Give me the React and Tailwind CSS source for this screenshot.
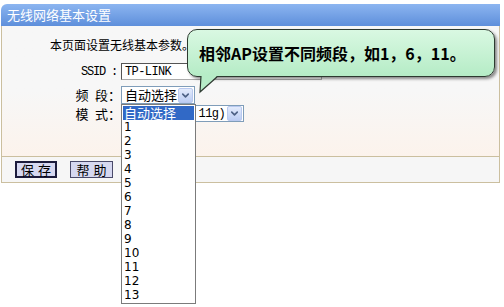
import { ChevronDown } from "lucide-react";

const channels = ["1", "2", "3", "4", "5", "6", "7", "8", "9", "10", "11", "12", "13"];

function Arrow() {
  return (
    <div className="flex h-[15px] w-[15px] items-center justify-center rounded-[2px] border border-[#b9c9ef] bg-gradient-to-b from-[#e3ebfc] to-[#bccdf3]">
      <ChevronDown className="h-[11px] w-[11px] text-[#4d6185]" strokeWidth={3.5} />
    </div>
  );
}

export default function App() {
  return (
    <div className="relative h-[307px] w-[504px] overflow-hidden bg-white font-['Noto_Sans_CJK_SC',sans-serif] text-[12px] leading-[14px] text-black">
      <div className="ml-[1px] w-[499px] pt-[4px]">
        <div className="flex h-[22px] items-center rounded-tl-[6px] bg-gradient-to-b from-[#8cb5f0] to-[#5e8fdb] pl-[6px] text-[13px] text-white">
          无线网络基本设置
        </div>
        <div className="h-[130px] border-x border-[#cbbf9f] bg-gradient-to-b from-[#f7f7f7] via-[#f7f7f7] to-[#fcf3ec] pt-[12px]">
          <div className="h-[14px] pl-[48px]">本页面设置无线基本参数。</div>
          <div className="mt-[11px] flex h-[17px] items-center">
            <div className="w-[119px] pr-[4px] text-right font-['Liberation_Mono',monospace] tracking-[-1.2px]">SSID :</div>
            <div className="flex h-[17px] w-[201px] items-center border border-t-[#555] border-l-[#555] border-b-[#aaa] border-r-[#aaa] bg-white pl-[3px] font-['Liberation_Mono',monospace] tracking-[-0.6px]">
              TP-LINK
            </div>
          </div>
          <div className="mt-[6px] flex h-[18px] items-center">
            <div className="w-[119px] whitespace-pre text-right text-[13px]">频{"\u2002"}段：</div>
            <div className="flex h-[18px] w-[74px] items-center justify-between border border-[#7f9db9] bg-white pl-[3px] pr-[1px] text-[13px]">
              <span>自动选择</span>
              <Arrow />
            </div>
          </div>
          <div className="mt-[1px] flex h-[17px] items-center">
            <div className="w-[119px] whitespace-pre text-right text-[13px]">模{"\u2002"}式：</div>
            <div className="flex h-[17px] w-[123px] items-center justify-end gap-[2px] border border-[#7f9db9] bg-white pr-[1px]">
              <span className="font-['Liberation_Mono',monospace] tracking-[-0.6px]">11g)</span>
              <Arrow />
            </div>
          </div>
        </div>
        <div className="flex h-[27px] items-center gap-[13px] border border-[#cbbf9f] bg-[#f6f6f6] pl-[13px]">
          <button className="flex h-[17px] w-[42px] items-center justify-center border-2 border-[#1c1c3c] bg-[#d6d8f0] pl-[4px] text-[13px] tracking-[4px]">
            保存
          </button>
          <button className="flex h-[17px] w-[43px] items-center justify-center border border-[#4a4a6a] bg-[#d6d8f0] pl-[4px] text-[13px] tracking-[4px]">
            帮助
          </button>
        </div>
      </div>

      {/* open channel list */}
      <div className="absolute left-[121px] top-[104px] w-[75px] border border-[#7b7b7b] bg-white pb-[1px] font-['DejaVu_Sans','Noto_Sans_CJK_SC',sans-serif]">
        <div className="mx-[1px] mt-[1px] h-[14px] bg-[#3169c6] pl-[1px] font-['Noto_Sans_CJK_SC',sans-serif] text-[13px] leading-[14px] text-white">自动选择</div>
        {channels.map((c) => (
          <div key={c} className="h-[14px] pl-[2px] text-[12px] leading-[14px]">{c}</div>
        ))}
      </div>

      {/* callout */}
      <div className="absolute left-[187px] top-[29px] flex h-[48px] w-[308px] items-center rounded-[10px] border border-[#2d3a30] bg-gradient-to-b from-[#d9f8e2] to-[#b5ecc6] pl-[11px] shadow-[2px_2px_3px_rgba(0,0,0,0.45)]">
        <span className="text-[16px] font-bold leading-[20px]">相邻AP设置不同频段，如1，6，11。</span>
      </div>
      <svg className="absolute left-[190px] top-[70px]" width="32" height="26" viewBox="0 0 32 26">
        <polygon points="11,5 28,5 10,22" fill="#b6ecc7" />
        <polyline points="11,6 10,22 27,7" fill="none" stroke="#2d3a30" strokeWidth="1.2" />
      </svg>
    </div>
  );
}
